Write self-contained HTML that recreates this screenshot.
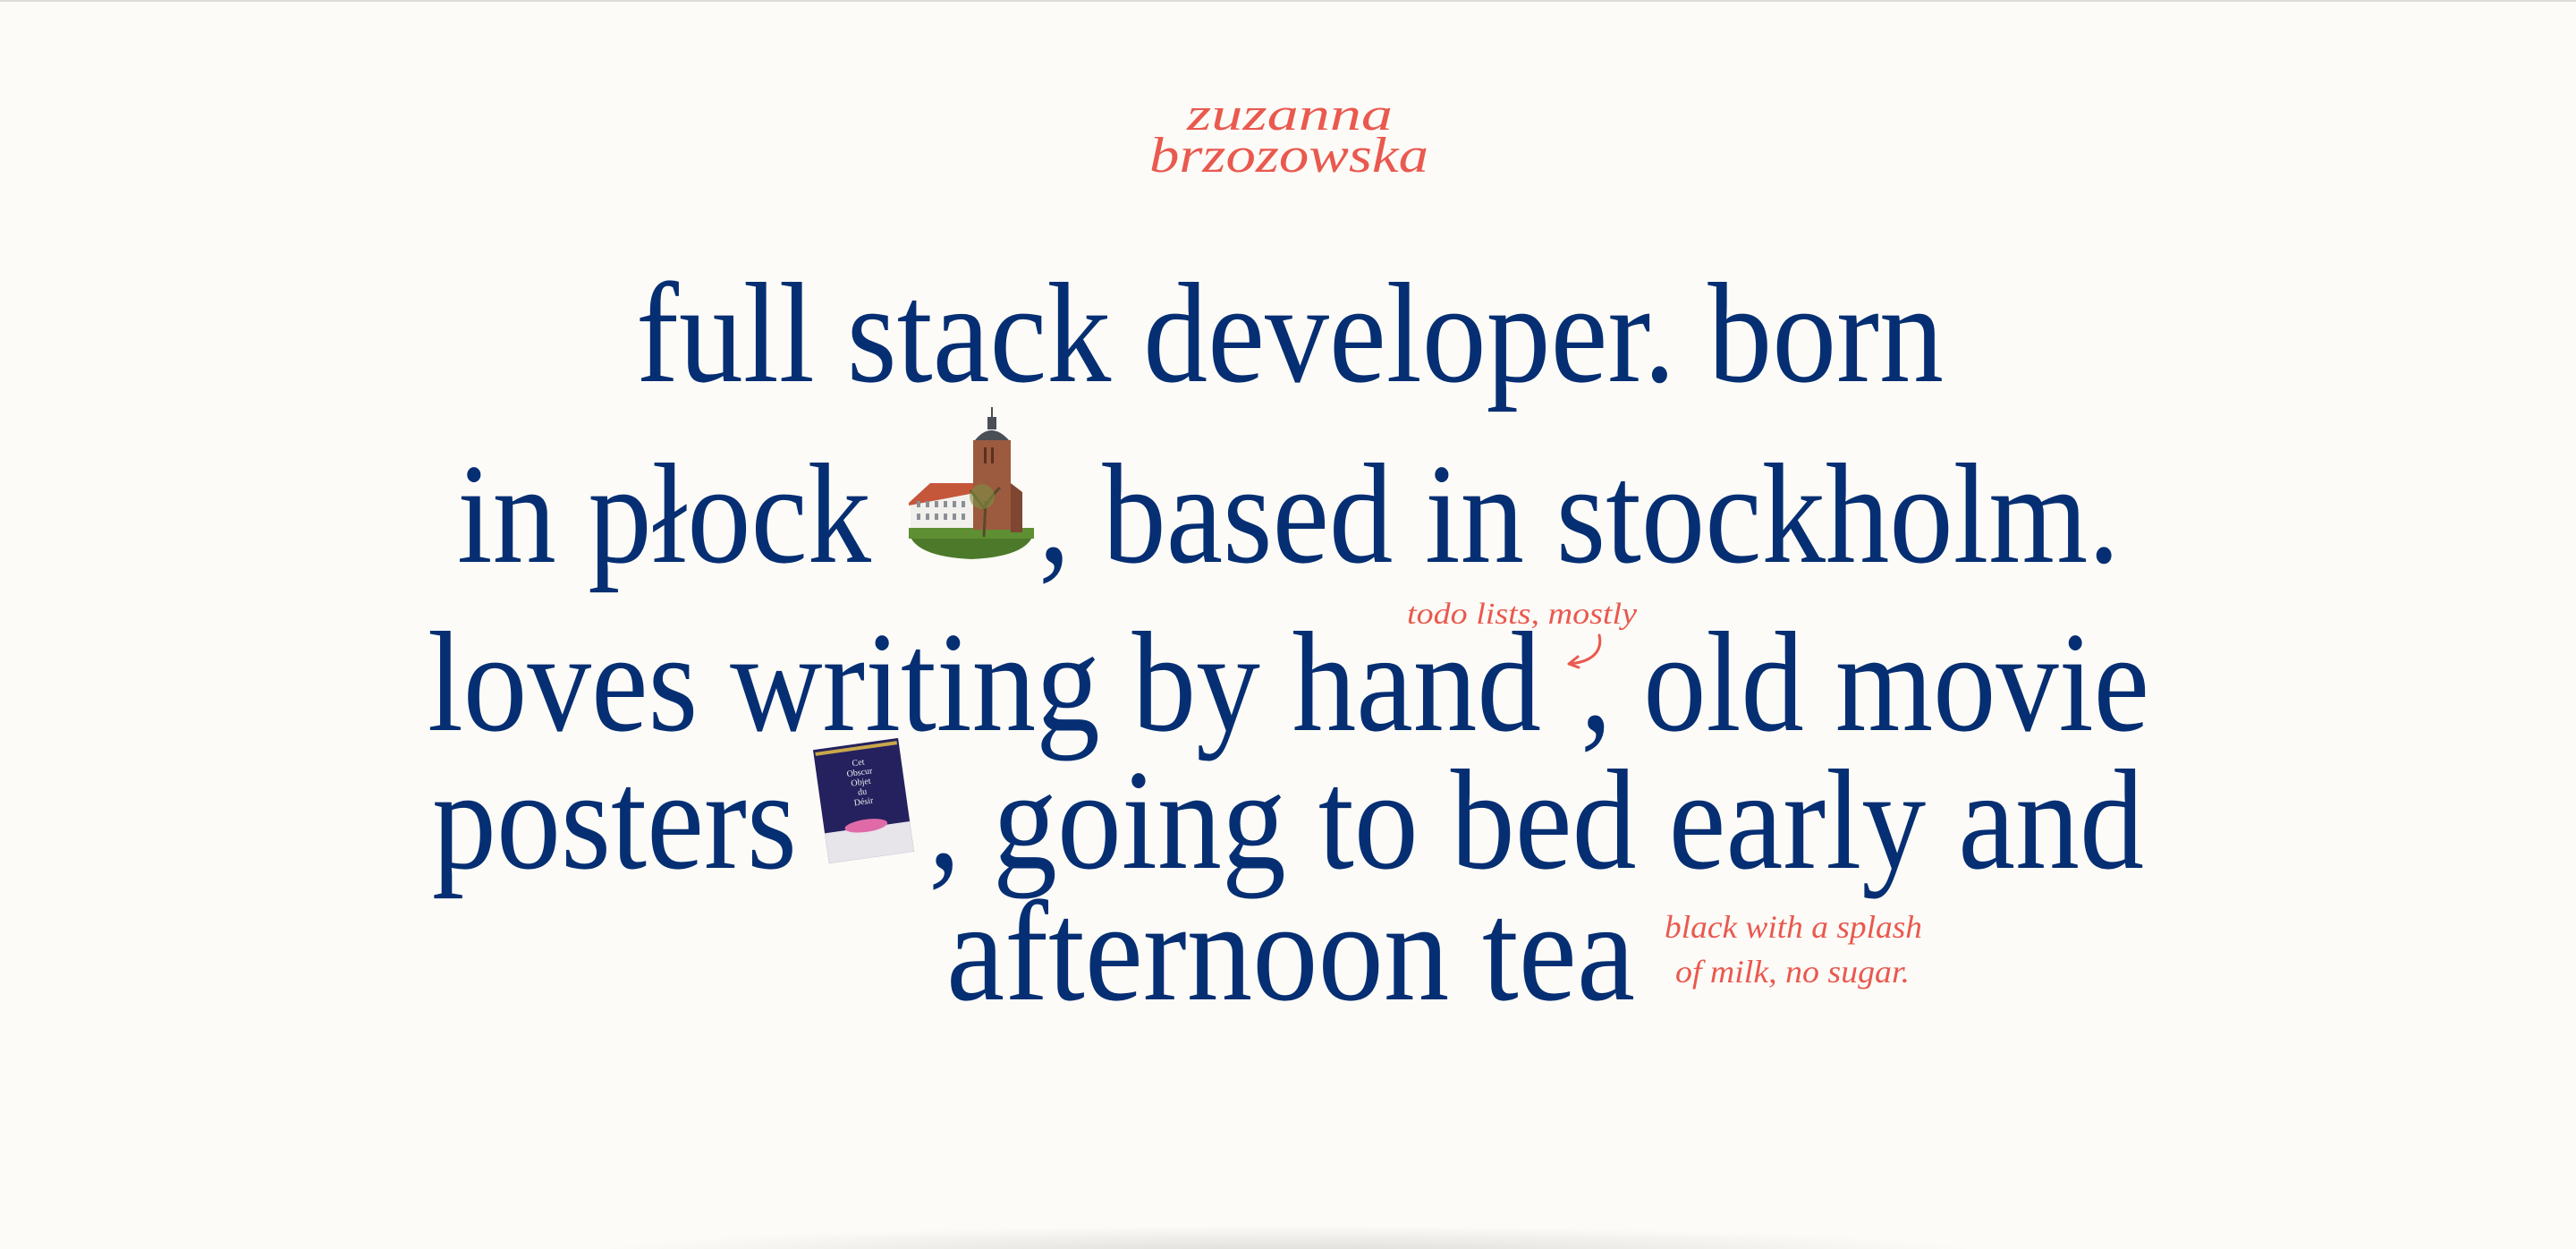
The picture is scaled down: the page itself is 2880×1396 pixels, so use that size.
<!DOCTYPE html>
<html><head><meta charset="utf-8"><style>
html,body{margin:0;padding:0;background:#fdfbf7;width:2880px;height:1396px;overflow:hidden}
svg{display:block}
.m{font-family:"Liberation Serif",serif;font-size:160px;fill:#062f73}
.r{font-family:"Liberation Serif",serif;font-style:italic;fill:#e9594f}
</style></head><body>
<svg width="2880" height="1396" viewBox="0 0 2880 1396" xmlns="http://www.w3.org/2000/svg">
<defs>
<radialGradient id="sh" cx="0.5" cy="0.5" r="0.5"><stop offset="0" stop-color="#000" stop-opacity="0.12"/><stop offset="1" stop-color="#000" stop-opacity="0"/></radialGradient>
</defs>
<rect width="2880" height="1396" fill="#fdfbf7"/>
<rect width="2880" height="2" fill="#dcdcdc"/>
<ellipse cx="1440" cy="1400" rx="780" ry="30" fill="url(#sh)"/>
<!-- logo -->
<text class="r" x="1327" y="145" font-size="52" textLength="230" lengthAdjust="spacingAndGlyphs">zuzanna</text>
<text class="r" x="1285" y="192" font-size="56" textLength="312" lengthAdjust="spacingAndGlyphs">brzozowska</text>
<!-- main text -->
<text class="m" x="711" y="426" textLength="1462" lengthAdjust="spacingAndGlyphs">full stack developer. born</text>
<text class="m" x="511" y="628" textLength="463" lengthAdjust="spacingAndGlyphs">in płock</text>
<text class="m" x="1161" y="628" textLength="1209" lengthAdjust="spacingAndGlyphs">, based in stockholm.</text>
<text class="m" x="478" y="816" textLength="1245" lengthAdjust="spacingAndGlyphs">loves writing by hand</text>
<text class="m" x="1767" y="816" textLength="636" lengthAdjust="spacingAndGlyphs">, old movie</text>
<text class="m" x="483" y="970" textLength="408" lengthAdjust="spacingAndGlyphs">posters</text>
<text class="m" x="1038" y="970" textLength="1359" lengthAdjust="spacingAndGlyphs">, going to bed early and</text>
<text class="m" x="1058" y="1117" textLength="770" lengthAdjust="spacingAndGlyphs">afternoon tea</text>
<!-- annotations -->
<text class="r" x="1573" y="697" font-size="34" textLength="257" lengthAdjust="spacingAndGlyphs">todo lists, mostly</text>
<path d="M1788 710 C1792 728 1780 740 1754 742 M1754 742 L1764 734 M1754 742 L1765 746" stroke="#e9594f" stroke-width="3" fill="none" stroke-linecap="round"/>
<text class="r" x="1861" y="1048" font-size="36" textLength="288" lengthAdjust="spacingAndGlyphs">black with a splash</text>
<text class="r" x="1873" y="1098" font-size="36" textLength="262" lengthAdjust="spacingAndGlyphs">of milk, no sugar.</text>
<!-- church -->
<g>
<path d="M1016 595 L1156 595 Q1150 622 1086 625 Q1022 622 1016 595Z" fill="#4d7a2a"/>
<rect x="1016" y="590" width="140" height="12" fill="#5e8f33"/>
<path d="M1018 560 L1040 543 L1092 543 L1092 590 L1018 590Z" fill="#f2f0ec"/>
<path d="M1016 562 L1040 540 L1095 540 L1095 550 L1016 565Z" fill="#c4563a"/>
<g fill="#8a8f96"><rect x="1025" y="560" width="4" height="7"/><rect x="1035" y="560" width="4" height="7"/><rect x="1045" y="560" width="4" height="7"/><rect x="1055" y="560" width="4" height="7"/><rect x="1065" y="560" width="4" height="7"/><rect x="1075" y="560" width="4" height="7"/><rect x="1025" y="574" width="4" height="7"/><rect x="1035" y="574" width="4" height="7"/><rect x="1045" y="574" width="4" height="7"/><rect x="1055" y="574" width="4" height="7"/><rect x="1065" y="574" width="4" height="7"/><rect x="1075" y="574" width="4" height="7"/></g>
<rect x="1088" y="492" width="42" height="100" fill="#9c5a3e"/>
<path d="M1130 540 L1143 550 L1143 595 L1130 595Z" fill="#7f4631"/>
<path d="M1090 492 Q1108 470 1128 492Z" fill="#4a4e55"/>
<rect x="1104" y="466" width="10" height="14" fill="#4a4e55"/>
<rect x="1108" y="455" width="2" height="12" fill="#4a4e55"/>
<rect x="1100" y="500" width="3" height="18" fill="#5a3020"/><rect x="1108" y="500" width="3" height="18" fill="#5a3020"/>
<path d="M1100 600 L1102 560 M1102 570 Q1090 555 1085 548 M1102 565 Q1112 550 1118 545" stroke="#5a4a2a" stroke-width="3" fill="none"/>
<circle cx="1098" cy="555" r="14" fill="#7b8f45" opacity="0.6"/>
</g>
<!-- poster -->
<g transform="rotate(-8 965 892)">
<rect x="917" y="831" width="96" height="128" fill="#24215e"/>
<rect x="917" y="925" width="96" height="34" fill="#e7e4ea"/>
<ellipse cx="964" cy="923" rx="24" ry="7" fill="#e06aa8"/>
<text x="965" y="855" font-family="Liberation Serif,serif" font-size="10" fill="#eee" text-anchor="middle">Cet</text>
<text x="965" y="866" font-family="Liberation Serif,serif" font-size="10" fill="#eee" text-anchor="middle">Obscur</text>
<text x="965" y="877" font-family="Liberation Serif,serif" font-size="10" fill="#eee" text-anchor="middle">Objet</text>
<text x="965" y="888" font-family="Liberation Serif,serif" font-size="10" fill="#eee" text-anchor="middle">du</text>
<text x="965" y="899" font-family="Liberation Serif,serif" font-size="10" fill="#eee" text-anchor="middle">Désir</text>
<rect x="919" y="834" width="92" height="4" fill="#c8a84a"/>
</g>
</svg>
</body></html>
